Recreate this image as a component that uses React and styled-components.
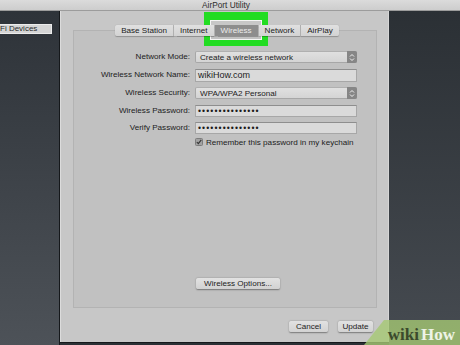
import styled, { createGlobalStyle } from 'styled-components';

const GlobalStyle = createGlobalStyle`
  html, body {
    margin: 0;
    padding: 0;
  }
  body {
    background: #2b3035;
    font-family: "Liberation Sans", Arial, sans-serif;
  }
`;

const Screen = styled.div`
  position: relative;
  width: 460px;
  height: 345px;
  overflow: hidden;
  display: flex;
  flex-direction: column;
  font-family: "Liberation Sans", Arial, sans-serif;
  font-size: 8.1px;
  color: #1c1c1c;
`;

const TitleBar = styled.div`
  flex: none;
  height: 11px;
  box-sizing: border-box;
  background: linear-gradient(#dbdbdb, #cdcdcd);
  border-bottom: 1px solid #9c9c9c;
  display: flex;
  justify-content: center;
  padding-right: 8px;
  font-size: 8.3px;
  line-height: 10px;
  color: #2c2c2c;
`;

const Body = styled.div`
  flex: 1;
  display: flex;
`;

const Sidebar = styled.div`
  width: 60px;
  flex: none;
  padding-top: 13px;
  box-sizing: border-box;
  background: linear-gradient(#2e3339, #4d5258);
  border-right: 1px solid #15181b;
`;

const SidebarItem = styled.div`
  width: 52px;
  height: 10px;
  box-sizing: border-box;
  background: #d5d5d5;
  border: 1px solid #ececec;
  border-left: none;
  font-size: 8px;
  line-height: 8px;
  color: #2a2a2a;
  white-space: nowrap;
  overflow: hidden;
`;

const Sheet = styled.div`
  width: 329px;
  height: 331px;
  flex: none;
  display: flex;
  flex-direction: column;
  background: #c7c7c7;
  box-sizing: border-box;
  border-left: 1px solid #dcdcdc;
  border-right: 1px solid #d6d6d6;
  box-shadow: 0 1px 0 #15181b;
`;

const Backdrop = styled.div`
  flex: 1;
  background: linear-gradient(#2b3035, #464b51);
`;

const Tabs = styled.div`
  position: relative;
  z-index: 1;
  margin: 14px 9px 0 14px;
  height: 11px;
  display: flex;
  justify-content: center;
`;

const Tab = styled.div`
  padding: 0 6px;
  height: 11px;
  line-height: 11px;
  box-sizing: border-box;
  background: ${({ $active }) => ($active ? '#8d8d8d' : 'linear-gradient(#e0e0e0, #d3d3d3)')};
  color: ${({ $active }) => ($active ? '#ececec' : '#1c1c1c')};
  border-right: 1px solid #b4b4b4;
  box-shadow: 0 0.5px 1px rgba(0, 0, 0, 0.25);
  white-space: nowrap;

  &:first-child {
    border-radius: 2px 0 0 2px;
  }
  &:last-child {
    border-right: none;
    border-radius: 0 2px 2px 0;
  }
`;

const TabBox = styled.div`
  margin: -6px 11px 0 12px;
  height: 278px;
  box-sizing: border-box;
  border: 1px solid #b3b3b3;
  background: #c1c1c1;
  padding: 20px 0 18px 0;
  display: flex;
  flex-direction: column;
`;

const Form = styled.div`
  display: grid;
  grid-template-columns: 116px 162px;
  column-gap: 5px;
  row-gap: 5.5px;
  align-items: center;
`;

const Label = styled.div`
  text-align: right;
  white-space: nowrap;
  line-height: 12px;
`;

const Field = styled.div`
  position: relative;
  height: ${({ $h }) => $h || 12}px;
  box-sizing: border-box;
  display: flex;
  align-items: center;
  padding-left: ${({ $pad }) => $pad || 4}px;
  background: ${({ $select }) => ($select ? 'linear-gradient(#e0e0e0, #d4d4d4)' : '#dadada')};
  border: 1px solid #a7a7a7;
  border-top-color: ${({ $select }) => ($select ? '#b0b0b0' : '#8e8e8e')};
  border-radius: ${({ $select }) => ($select ? 2 : 0)}px;
  font-size: ${({ $size }) => $size || 8.1}px;
  white-space: nowrap;
`;

const Stepper = styled.div`
  position: absolute;
  right: -1px;
  top: -1px;
  width: 10px;
  height: 12px;
  border-radius: 0 2px 2px 0;
  background: #868686;
  display: flex;
  align-items: center;
  justify-content: center;
`;

const Dots = styled.span`
  font-size: 8.6px;
  letter-spacing: 1.1px;
  color: #1a1a1a;
`;

const CheckRow = styled.div`
  grid-column: 2;
  margin-top: -2px;
  display: flex;
  align-items: center;
  gap: 3px;
  white-space: nowrap;
  line-height: 9px;
`;

const PushButton = styled.div`
  height: 11px;
  width: ${({ $w }) => $w}px;
  box-sizing: border-box;
  background: linear-gradient(#e2e2e2, #d2d2d2);
  border-radius: 2px;
  box-shadow: 0 0.5px 1.5px rgba(0, 0, 0, 0.4);
  text-align: center;
  line-height: 11px;
  white-space: nowrap;
`;

const OptionsButton = styled(PushButton)`
  margin-top: auto;
  margin-left: 122px;
`;

const Footer = styled.div`
  margin-top: 13px;
  padding-right: 15px;
  display: flex;
  justify-content: flex-end;
  gap: 10px;
`;

const Highlight = styled.div`
  position: absolute;
  left: 204px;
  top: 12px;
  width: 64px;
  height: 34px;
  box-sizing: border-box;
  border: 6px solid #22dc22;
  border-top-width: 8px;
  box-shadow: inset 0 0 0 1px #f4f4f4;
  pointer-events: none;
`;

const Watermark = styled.div`
  position: absolute;
  right: 0;
  bottom: 0;
  width: 96px;
  height: 25px;
  background: rgba(165, 200, 115, 0.8);
  clip-path: polygon(0 100%, 20px 0, 100% 0, 100% 100%);
  display: flex;
  justify-content: flex-end;
  align-items: flex-end;
  padding-right: 5px;
  box-sizing: border-box;
  font-family: "Liberation Serif", "Times New Roman", serif;
  font-weight: bold;
  font-size: 17px;
  line-height: 20px;
`;

const Wiki = styled.span`
  color: #3b4a2c;
`;

const How = styled.span`
  color: #eef3e6;
  margin-left: 2px;
`;

const Chevrons = () => (
  <svg width="6" height="9" viewBox="0 0 6 9">
    <path d="M1 3.5 L3 1.5 L5 3.5 M1 5.5 L3 7.5 L5 5.5" fill="none" stroke="#f2f2f2" strokeWidth="1" />
  </svg>
);

const CheckBox = () => (
  <svg width="8" height="8" viewBox="0 0 8 8">
    <rect x="0.5" y="0.5" width="7" height="7" rx="1" fill="#a2a2a2" stroke="#7c7c7c" />
    <path d="M1.8 4 L3.3 5.7 L6.3 1.8" fill="none" stroke="#333" strokeWidth="1.1" />
  </svg>
);

const tabs = ['Base Station', 'Internet', 'Wireless', 'Network', 'AirPlay'];

export default function App() {
  return (
    <>
      <GlobalStyle />
      <Screen>
        <TitleBar>AirPort Utility</TitleBar>
        <Body>
          <Sidebar>
            <SidebarItem>Fi Devices</SidebarItem>
          </Sidebar>
          <Sheet>
            <Tabs>
              {tabs.map((t) => (
                <Tab key={t} $active={t === 'Wireless'}>{t}</Tab>
              ))}
            </Tabs>
            <TabBox>
              <Form>
                <Label>Network Mode:</Label>
                <Field $select>
                  Create a wireless network
                  <Stepper><Chevrons /></Stepper>
                </Field>
                <Label>Wireless Network Name:</Label>
                <Field $size={9} $pad={2} $h={13}>wikiHow.com</Field>
                <Label>Wireless Security:</Label>
                <Field $select>
                  WPA/WPA2 Personal
                  <Stepper><Chevrons /></Stepper>
                </Field>
                <Label>Wireless Password:</Label>
                <Field $pad={2}><Dots>•••••••••••••••</Dots></Field>
                <Label>Verify Password:</Label>
                <Field $pad={2}><Dots>•••••••••••••••</Dots></Field>
                <CheckRow>
                  <CheckBox />
                  Remember this password in my keychain
                </CheckRow>
              </Form>
              <OptionsButton $w={84}>Wireless Options...</OptionsButton>
            </TabBox>
            <Footer>
              <PushButton $w={39}>Cancel</PushButton>
              <PushButton $w={35}>Update</PushButton>
            </Footer>
          </Sheet>
          <Backdrop />
        </Body>
        <Highlight />
        <Watermark>
          <Wiki>wiki</Wiki>
          <How>How</How>
        </Watermark>
      </Screen>
    </>
  );
}
